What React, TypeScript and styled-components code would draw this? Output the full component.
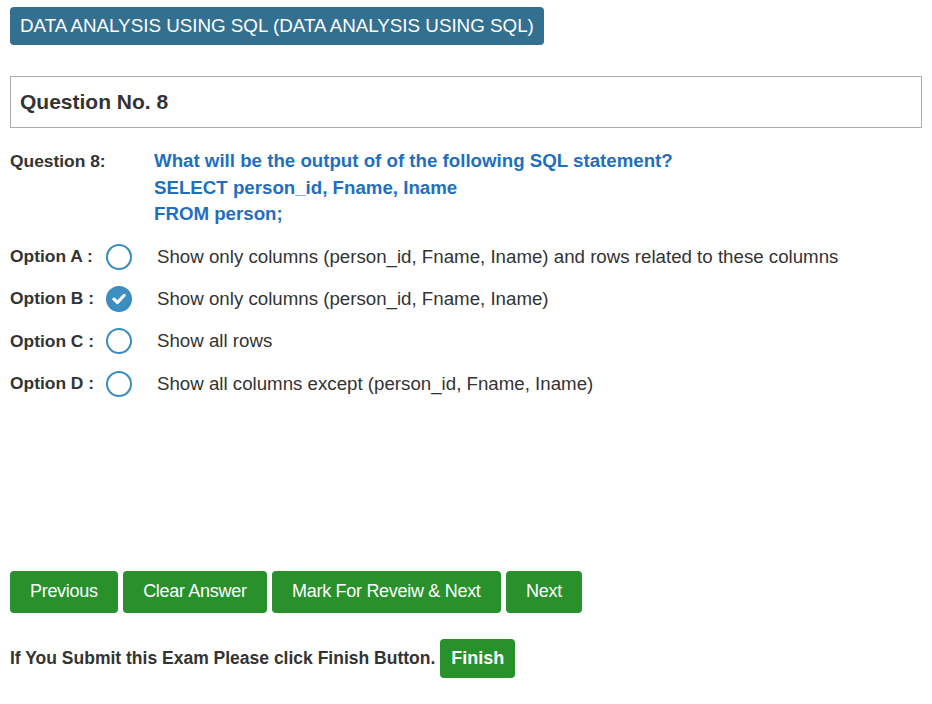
import styled, { createGlobalStyle } from "styled-components";

const GlobalStyle = createGlobalStyle`
  body {
    margin: 0;
    background: #fff;
    font-family: "Liberation Sans", Arial, sans-serif;
    color: #333;
  }
`;

const Page = styled.div`
  padding: 7px 10px 0 10px;
  width: 912px;
`;

const SubjectTag = styled.div`
  display: inline-flex;
  align-items: center;
  height: 38px;
  padding: 0 10px;
  background: #337090;
  color: #fff;
  font-size: 18.8px;
  border-radius: 4px;
`;

const QuestionBox = styled.div`
  margin-top: 31px;
  height: 50px;
  border: 1px solid #b0a9a9;
  display: flex;
  align-items: center;
  padding: 0 9px;
  font-size: 21px;
  font-weight: bold;
  color: #333;
`;

const QuestionRow = styled.div`
  display: grid;
  grid-template-columns: 144px 1fr;
  margin-top: 20px;
`;

const QLabel = styled.div`
  font-size: 17.4px;
  font-weight: bold;
  line-height: 26.5px;
  color: #333;
`;

const QText = styled.div`
  font-size: 18.7px;
  font-weight: bold;
  line-height: 26.5px;
  color: #1f6fbf;
`;

const Options = styled.div`
  margin-top: 8px;
  display: flex;
  flex-direction: column;
`;

const OptionRow = styled.label`
  display: flex;
  align-items: center;
  height: 42.3px;
`;

const OptLabel = styled.span`
  width: 96px;
  font-size: 17.4px;
  font-weight: bold;
  color: #333;
`;

const Radio = styled.span<{ $checked?: boolean }>`
  width: 26px;
  height: 26px;
  box-sizing: border-box;
  border-radius: 50%;
  border: 2px solid #3a8bbf;
  background: ${(p) => (p.$checked ? "#3d8fc2" : "#fff")};
  display: flex;
  align-items: center;
  justify-content: center;
`;

const OptText = styled.span`
  margin-left: 25px;
  font-size: 18.7px;
  color: #333;
`;

const ButtonBar = styled.div`
  margin-top: 166px;
  display: flex;
  gap: 5.5px;
`;

const Btn = styled.button<{ $bold?: boolean }>`
  height: 42px;
  padding: 0 20px;
  border: none;
  border-radius: 4px;
  background: #28912c;
  color: #fff;
  font-family: "Liberation Sans", Arial, sans-serif;
  font-size: 18px;
  font-weight: ${(p) => (p.$bold ? "bold" : "normal")};
  letter-spacing: -0.3px;
`;

const FinishRow = styled.div`
  margin-top: 26px;
  display: flex;
  align-items: center;
  gap: 5px;
  font-size: 17.5px;
  font-weight: bold;
  color: #333;
`;

const FinishBtn = styled(Btn)`
  height: 39px;
  padding: 0 11px;
  letter-spacing: 0;
`;

const options = [
  { key: "A", text: "Show only columns (person_id, Fname, Iname) and rows related to these columns" },
  { key: "B", text: "Show only columns (person_id, Fname, Iname)", checked: true },
  { key: "C", text: "Show all rows" },
  { key: "D", text: "Show all columns except (person_id, Fname, Iname)" },
];

export default function App() {
  return (
    <>
      <GlobalStyle />
      <Page>
        <SubjectTag>DATA ANALYSIS USING SQL (DATA ANALYSIS USING SQL)</SubjectTag>
        <QuestionBox>Question No. 8</QuestionBox>
        <QuestionRow>
          <QLabel>Question 8:</QLabel>
          <QText>
            What will be the output of of the following SQL statement?
            <br />
            SELECT person_id, Fname, Iname
            <br />
            FROM person;
          </QText>
        </QuestionRow>
        <Options>
          {options.map((o) => (
            <OptionRow key={o.key}>
              <OptLabel>Option {o.key} :</OptLabel>
              <Radio $checked={o.checked}>
                {o.checked && (
                  <svg width="14" height="12" viewBox="0 0 14 12">
                    <path d="M2 6.2 L5.5 9.5 L12 2.5" fill="none" stroke="#fff" strokeWidth="3.2" strokeLinecap="round" strokeLinejoin="round" />
                  </svg>
                )}
              </Radio>
              <OptText>{o.text}</OptText>
            </OptionRow>
          ))}
        </Options>
        <ButtonBar>
          <Btn>Previous</Btn>
          <Btn>Clear Answer</Btn>
          <Btn>Mark For Reveiw &amp; Next</Btn>
          <Btn>Next</Btn>
        </ButtonBar>
        <FinishRow>
          If You Submit this Exam Please click Finish Button.
          <FinishBtn $bold>Finish</FinishBtn>
        </FinishRow>
      </Page>
    </>
  );
}
